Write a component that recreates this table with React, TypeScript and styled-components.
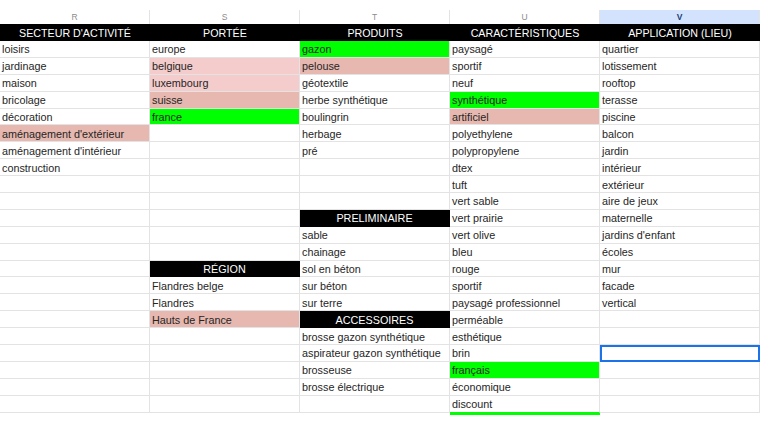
import styled, { createGlobalStyle } from "styled-components";

type Fill = "green" | "light" | "rose" | "black";

interface ICell {
  text?: string;
  fill?: Fill;
  selected?: boolean;
  underline?: boolean;
}

type CellInput = string | ICell | null;

const FILLS: Record<Fill, string> = {
  green: "#00ff00",
  light: "#f4cccc",
  rose: "#e6b8af",
  black: "#000000",
};

const LETTERS = ["R", "S", "T", "U", "V"];

const HEADERS = [
  "SECTEUR D'ACTIVITÉ",
  "PORTÉE",
  "PRODUITS",
  "CARACTÉRISTIQUES",
  "APPLICATION (LIEU)",
];

const ROWS = 22;

const COLUMNS: CellInput[][] = [
  [
    "loisirs",
    "jardinage",
    "maison",
    "bricolage",
    "décoration",
    { text: "aménagement d'extérieur", fill: "rose" },
    "aménagement d'intérieur",
    "construction",
  ],
  [
    "europe",
    { text: "belgique", fill: "light" },
    { text: "luxembourg", fill: "light" },
    { text: "suisse", fill: "rose" },
    { text: "france", fill: "green" },
    null,
    null,
    null,
    null,
    null,
    null,
    null,
    null,
    { text: "RÉGION", fill: "black" },
    "Flandres belge",
    "Flandres",
    { text: "Hauts de France", fill: "rose" },
  ],
  [
    { text: "gazon", fill: "green" },
    { text: "pelouse", fill: "rose" },
    "géotextile",
    "herbe synthétique",
    "boulingrin",
    "herbage",
    "pré",
    null,
    null,
    null,
    { text: "PRELIMINAIRE", fill: "black" },
    "sable",
    "chainage",
    "sol en béton",
    "sur béton",
    "sur terre",
    { text: "ACCESSOIRES", fill: "black" },
    "brosse gazon synthétique",
    "aspirateur gazon synthétique",
    "brosseuse",
    "brosse électrique",
  ],
  [
    "paysagé",
    "sportif",
    "neuf",
    { text: "synthétique", fill: "green" },
    { text: "artificiel", fill: "rose" },
    "polyethylene",
    "polypropylene",
    "dtex",
    "tuft",
    "vert sable",
    "vert prairie",
    "vert olive",
    "bleu",
    "rouge",
    "sportif",
    "paysagé professionnel",
    "perméable",
    "esthétique",
    "brin",
    { text: "français", fill: "green" },
    "économique",
    { text: "discount", underline: true },
  ],
  [
    "quartier",
    "lotissement",
    "rooftop",
    "terasse",
    "piscine",
    "balcon",
    "jardin",
    "intérieur",
    "extérieur",
    "aire de jeux",
    "maternelle",
    "jardins d'enfant",
    "écoles",
    "mur",
    "facade",
    "vertical",
    null,
    null,
    { selected: true },
  ],
];

const toCell = (input: CellInput | undefined): ICell => {
  if (!input) return {};
  if (typeof input === "string") return { text: input };
  return input;
};

export default function App() {
  const rows = Array.from({ length: ROWS }, (_, r) => COLUMNS.map((col) => toCell(col[r])));

  return (
    <>
      <GlobalStyle />
      <StyledSheet>
        {LETTERS.map((letter) => (
          <StyledLetter key={letter} $active={letter === "V"}>
            {letter}
          </StyledLetter>
        ))}
        {HEADERS.map((title) => (
          <StyledHeader key={title}>{title}</StyledHeader>
        ))}
        {rows.map((row, r) =>
          row.map((cell, c) => (
            <StyledCell
              key={`${r}-${c}`}
              $fill={cell.fill}
              $selected={cell.selected}
              $underline={cell.underline}
            >
              {cell.text}
            </StyledCell>
          ))
        )}
      </StyledSheet>
    </>
  );
}

const GlobalStyle = createGlobalStyle`
  body {
    margin: 0;
    background: #ffffff;
    font-family: "Liberation Sans", Arial, sans-serif;
  }
`;

const StyledSheet = styled.div`
  width: 760px;
  height: 427px;
  box-sizing: border-box;
  padding-top: 10px;
  overflow: hidden;
  display: grid;
  grid-template-columns: repeat(4, 150px) 1fr;
  grid-template-rows: 14px 17px repeat(${ROWS}, 16.9px);
  align-content: start;
`;

const StyledLetter = styled.div<{ $active?: boolean }>`
  display: flex;
  align-items: center;
  justify-content: center;
  font-size: 8.5px;
  color: ${({ $active }) => ($active ? "#1f3f7a" : "#8c8c8c")};
  font-weight: ${({ $active }) => ($active ? 700 : 400)};
  background: ${({ $active }) => ($active ? "#d3e3fd" : "#ffffff")};
  border-right: 1px solid #e3e3e3;
  box-sizing: border-box;
`;

const StyledHeader = styled.div`
  display: flex;
  align-items: center;
  justify-content: center;
  background: #000000;
  color: #ffffff;
  font-size: 10.7px;
  white-space: nowrap;
  overflow: hidden;
`;

const StyledCell = styled.div<{ $fill?: Fill; $selected?: boolean; $underline?: boolean }>`
  display: flex;
  align-items: center;
  justify-content: ${({ $fill }) => ($fill === "black" ? "center" : "flex-start")};
  padding: 1px 2px 0;
  box-sizing: border-box;
  font-size: 10.8px;
  white-space: nowrap;
  overflow: hidden;
  color: ${({ $fill }) => ($fill === "black" ? "#ffffff" : "#262626")};
  background: ${({ $fill }) => ($fill ? FILLS[$fill] : "#ffffff")};
  border-right: 1px solid ${({ $fill }) => ($fill === "black" ? "#000000" : "#e3e3e3")};
  border-bottom: 1px solid
    ${({ $fill, $underline }) => ($underline ? "#00ff00" : $fill === "black" ? "#000000" : "#e3e3e3")};
  box-shadow: ${({ $underline }) => ($underline ? "0 2px 0 0 #00ff00" : "none")};
  outline: ${({ $selected }) => ($selected ? "2px solid #1a73e8" : "none")};
  outline-offset: -2px;
`;
